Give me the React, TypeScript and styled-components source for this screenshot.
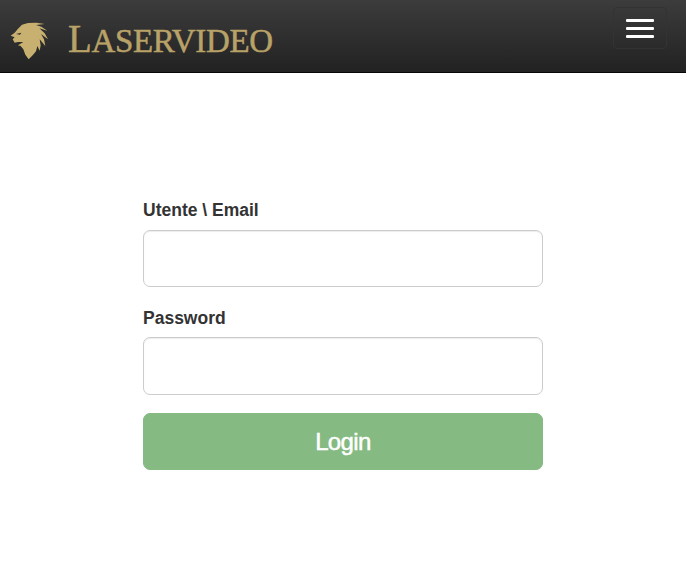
import React from "react";
import styled, { createGlobalStyle } from "styled-components";

const Global = createGlobalStyle`
  html, body { margin: 0; padding: 0; background: #fff; }
  body { font-family: "Liberation Sans", Arial, sans-serif; color: #333; }
  * { box-sizing: border-box; }
`;

const Page = styled.div`
  width: 686px;
  height: 566px;
`;

const Navbar = styled.header`
  height: 73px;
  display: flex;
  align-items: flex-start;
  justify-content: space-between;
  background: linear-gradient(to bottom, #3c3c3c 0%, #222 100%);
  border-bottom: 1px solid #080808;
`;

const Brand = styled.a`
  display: flex;
  align-items: flex-start;
  padding: 20px 0 0 8px;
  gap: 16px;
`;

const LogoText = styled.span`
  font-family: "Liberation Serif", "Times New Roman", serif;
  font-size: 33px;
  line-height: 38px;
  color: #b9a267;
  letter-spacing: -0.35px;
  -webkit-text-stroke: 0.5px #b9a267;
`;

const LogoCap = styled.span`
  font-size: 39px;
`;

const Toggle = styled.button`
  width: 54px;
  height: 42px;
  margin: 7px 19px 0 0;
  padding: 0;
  display: flex;
  flex-direction: column;
  align-items: center;
  justify-content: center;
  gap: 5px;
  background: transparent;
  border: 1px solid #333;
  border-radius: 4px;
`;

const Bar = styled.span`
  display: block;
  width: 28px;
  height: 3px;
  background: #fff;
  border-radius: 1px;
`;

const Form = styled.form`
  width: 400px;
  margin: 126px 0 0 143px;
`;

const Field = styled.div<{ $gap: number }>`
  margin-bottom: ${(p) => p.$gap}px;
`;

const Label = styled.label<{ $gap: number }>`
  display: block;
  font-size: 17.5px;
  font-weight: 700;
  line-height: 22px;
  margin-bottom: ${(p) => p.$gap}px;
  color: #333;
`;

const Input = styled.input<{ $h: number }>`
  display: block;
  width: 100%;
  height: ${(p) => p.$h}px;
  border: 1px solid #ccc;
  border-radius: 7px;
  background: #fff;
  box-shadow: inset 0 1px 1px rgba(0, 0, 0, 0.075);
`;

const LoginButton = styled.button`
  display: block;
  width: 100%;
  height: 57px;
  border: 1px solid #85ba82;
  border-radius: 7px;
  background: #85ba82;
  color: #fff;
  font-family: "Liberation Sans", Arial, sans-serif;
  font-size: 24px;
  letter-spacing: -0.6px;
  -webkit-text-stroke: 0.5px #fff;
`;

const Lion = () => (
  <svg width="44" height="42" viewBox="0 0 132 126" aria-hidden="true">
    <path
      fill="#c8b170"
      d="M8 47 L20 38 L30 26 L42 14 L60 9 L85 8 L110 12 L84 15 L100 20 L118 32 L94 25 L110 40 L120 58 L99 42 L108 58 L112 78 L95 58 L98 76 L95 92 L88 78 L84 94 L74 106 L62 118 L52 104 L46 88 L38 78 L30 76 L46 66 L30 66 L20 68 L14 58 L20 52 Z"
    />
    <path d="M24 42 L40 38 L36 44 Z" fill="#2c2c2c" />
  </svg>
);

export default function App() {
  return (
    <Page>
      <Global />
      <Navbar>
        <Brand>
          <Lion />
          <LogoText>
            <LogoCap>L</LogoCap>ASERVIDEO
          </LogoText>
        </Brand>
        <Toggle type="button" aria-label="Menu">
          <Bar />
          <Bar />
          <Bar />
        </Toggle>
      </Navbar>
      <Form>
        <Field $gap={20}>
          <Label $gap={9}>Utente \ Email</Label>
          <Input $h={57} type="text" />
        </Field>
        <Field $gap={18}>
          <Label $gap={8}>Password</Label>
          <Input $h={58} type="password" />
        </Field>
        <LoginButton type="button">Login</LoginButton>
      </Form>
    </Page>
  );
}
